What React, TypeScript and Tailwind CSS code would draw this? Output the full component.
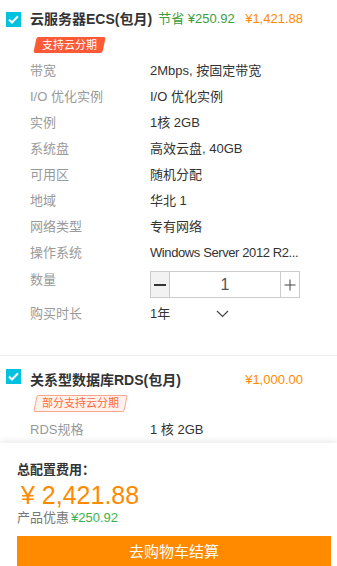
import React from 'react';

const font = { fontFamily: '"Liberation Sans", "Noto Sans CJK SC", sans-serif' };

const Check = () => (
  <span className="flex w-[15px] h-[15px] shrink-0 items-center justify-center bg-[#00c1de]">
    <svg width="11" height="9" viewBox="0 0 11 9" fill="none">
      <path d="M1 4.5 L4 7.5 L10 1.2" stroke="#fff" strokeWidth="2" />
    </svg>
  </span>
);

const Row = ({ label, value }: { label: string; value: React.ReactNode }) => (
  <div className="flex h-[26px] items-center text-[13px] leading-[16px]">
    <div className="w-[120px] text-[#999]">{label}</div>
    <div className="w-[160px] whitespace-nowrap text-[#333]">{value}</div>
  </div>
);

export default function App() {
  const ecsRows: [string, React.ReactNode][] = [
    ['带宽', '2Mbps, 按固定带宽'],
    ['I/O 优化实例', 'I/O 优化实例'],
    ['实例', '1核 2GB'],
    ['系统盘', '高效云盘, 40GB'],
    ['可用区', '随机分配'],
    ['地域', '华北 1'],
    ['网络类型', '专有网络'],
    ['操作系统', <span className="tracking-[-0.4px]">Windows Server 2012 R2...</span>],
  ];

  return (
    <div className="flex h-[566px] w-[337px] flex-col overflow-hidden bg-white" style={font}>
      <div className="flex-1 overflow-hidden">
        {/* ECS */}
        <div className="border-b border-[#eee] pb-[28px] pt-[10px]">
          <div className="flex h-[18px] items-center whitespace-nowrap pl-[6px] pr-[34px]">
            <Check />
            <span className="ml-[9px] text-[14px] font-bold leading-[18px] text-[#333]">云服务器ECS(包月)</span>
            <span className="ml-[6px] text-[13px] leading-[18px] text-[#3c9d3e]">节省 ¥250.92</span>
            <span className="ml-auto text-[13px] leading-[18px] text-[#ff8a00]">¥1,421.88</span>
          </div>
          <div className="mt-[9px] flex pl-[35px]">
            <div className="flex h-[16px] -skew-x-12 items-center rounded-[2px] bg-[#ff5a35] px-[7px]">
              <span className="skew-x-12 text-[11px] leading-none text-white">支持云分期</span>
            </div>
          </div>
          <div className="mt-[5px] pl-[30px]">
            {ecsRows.map(([l, v]) => (
              <Row key={l} label={l} value={v} />
            ))}
            <div className="flex pt-[5px] text-[13px] leading-[16px]">
              <div className="w-[120px] pt-[1px] text-[#999]">数量</div>
              <div className="flex h-[27px] w-[150px] border border-[#ccc]">
                <div className="flex w-[19px] items-center justify-center border-r border-[#ccc] bg-[#f2f2f2]">
                  <span className="h-[2px] w-[12px] bg-[#333]" />
                </div>
                <div className="flex flex-1 items-center justify-center text-[16px] font-light text-[#555]">1</div>
                <div className="flex w-[19px] items-center justify-center border-l border-[#ccc]">
                  <svg width="12" height="12" viewBox="0 0 12 12">
                    <path d="M6 0.5V11.5M0.5 6H11.5" stroke="#444" strokeWidth="1" />
                  </svg>
                </div>
              </div>
            </div>
            <div className="mt-[3px] flex h-[26px] items-center text-[13px] leading-[16px]">
              <div className="w-[120px] text-[#999]">购买时长</div>
              <div className="flex items-center text-[#333]">
                <span>1年</span>
                <svg className="ml-[46px]" width="13" height="8" viewBox="0 0 13 8" fill="none">
                  <path d="M1 1 L6.5 6.5 L12 1" stroke="#444" strokeWidth="1.2" />
                </svg>
              </div>
            </div>
          </div>
        </div>

        {/* RDS */}
        <div className="pt-[13px]">
          <div className="flex h-[15px] items-center whitespace-nowrap pl-[6px] pr-[34px]">
            <Check />
            <span className="ml-[9px] mt-[6px] text-[14px] font-bold leading-[18px] text-[#333]">关系型数据库RDS(包月)</span>
            <span className="ml-auto mt-[6px] text-[13px] leading-[18px] text-[#ff8a00]">¥1,000.00</span>
          </div>
          <div className="mt-[11px] flex pl-[35px]">
            <div className="flex h-[17px] -skew-x-12 items-center rounded-[2px] border border-[#f9a78c] bg-[#fff1ec] px-[6px]">
              <span className="skew-x-12 text-[11px] leading-none text-[#ff6a3d]">部分支持云分期</span>
            </div>
          </div>
          <div className="mt-[5px] pl-[30px]">
            <Row label="RDS规格" value="1 核 2GB" />
          </div>
        </div>
      </div>

      {/* bottom */}
      <div className="h-[123px] shrink-0 bg-white px-[17px] pt-[19px] shadow-[0_-3px_6px_rgba(0,0,0,0.07)]">
        <div className="text-[13px] font-bold leading-[15px] text-[#333]">总配置费用：</div>
        <div className="mt-[5px] pl-[4px] text-[25px] leading-[26px] text-[#ff8a00]">¥ 2,421.88</div>
        <div className="mt-[2px] text-[13px] leading-[15px]">
          <span className="text-[#777]">产品优惠</span>
          <span className="ml-[2px] text-[#3cb44b]">¥250.92</span>
        </div>
        <button className="mt-[11px] flex h-[31px] w-[314px] items-center justify-center bg-[#ff8a00] text-[15px] leading-[18px] text-white">
          去购物车结算
        </button>
      </div>
    </div>
  );
}
